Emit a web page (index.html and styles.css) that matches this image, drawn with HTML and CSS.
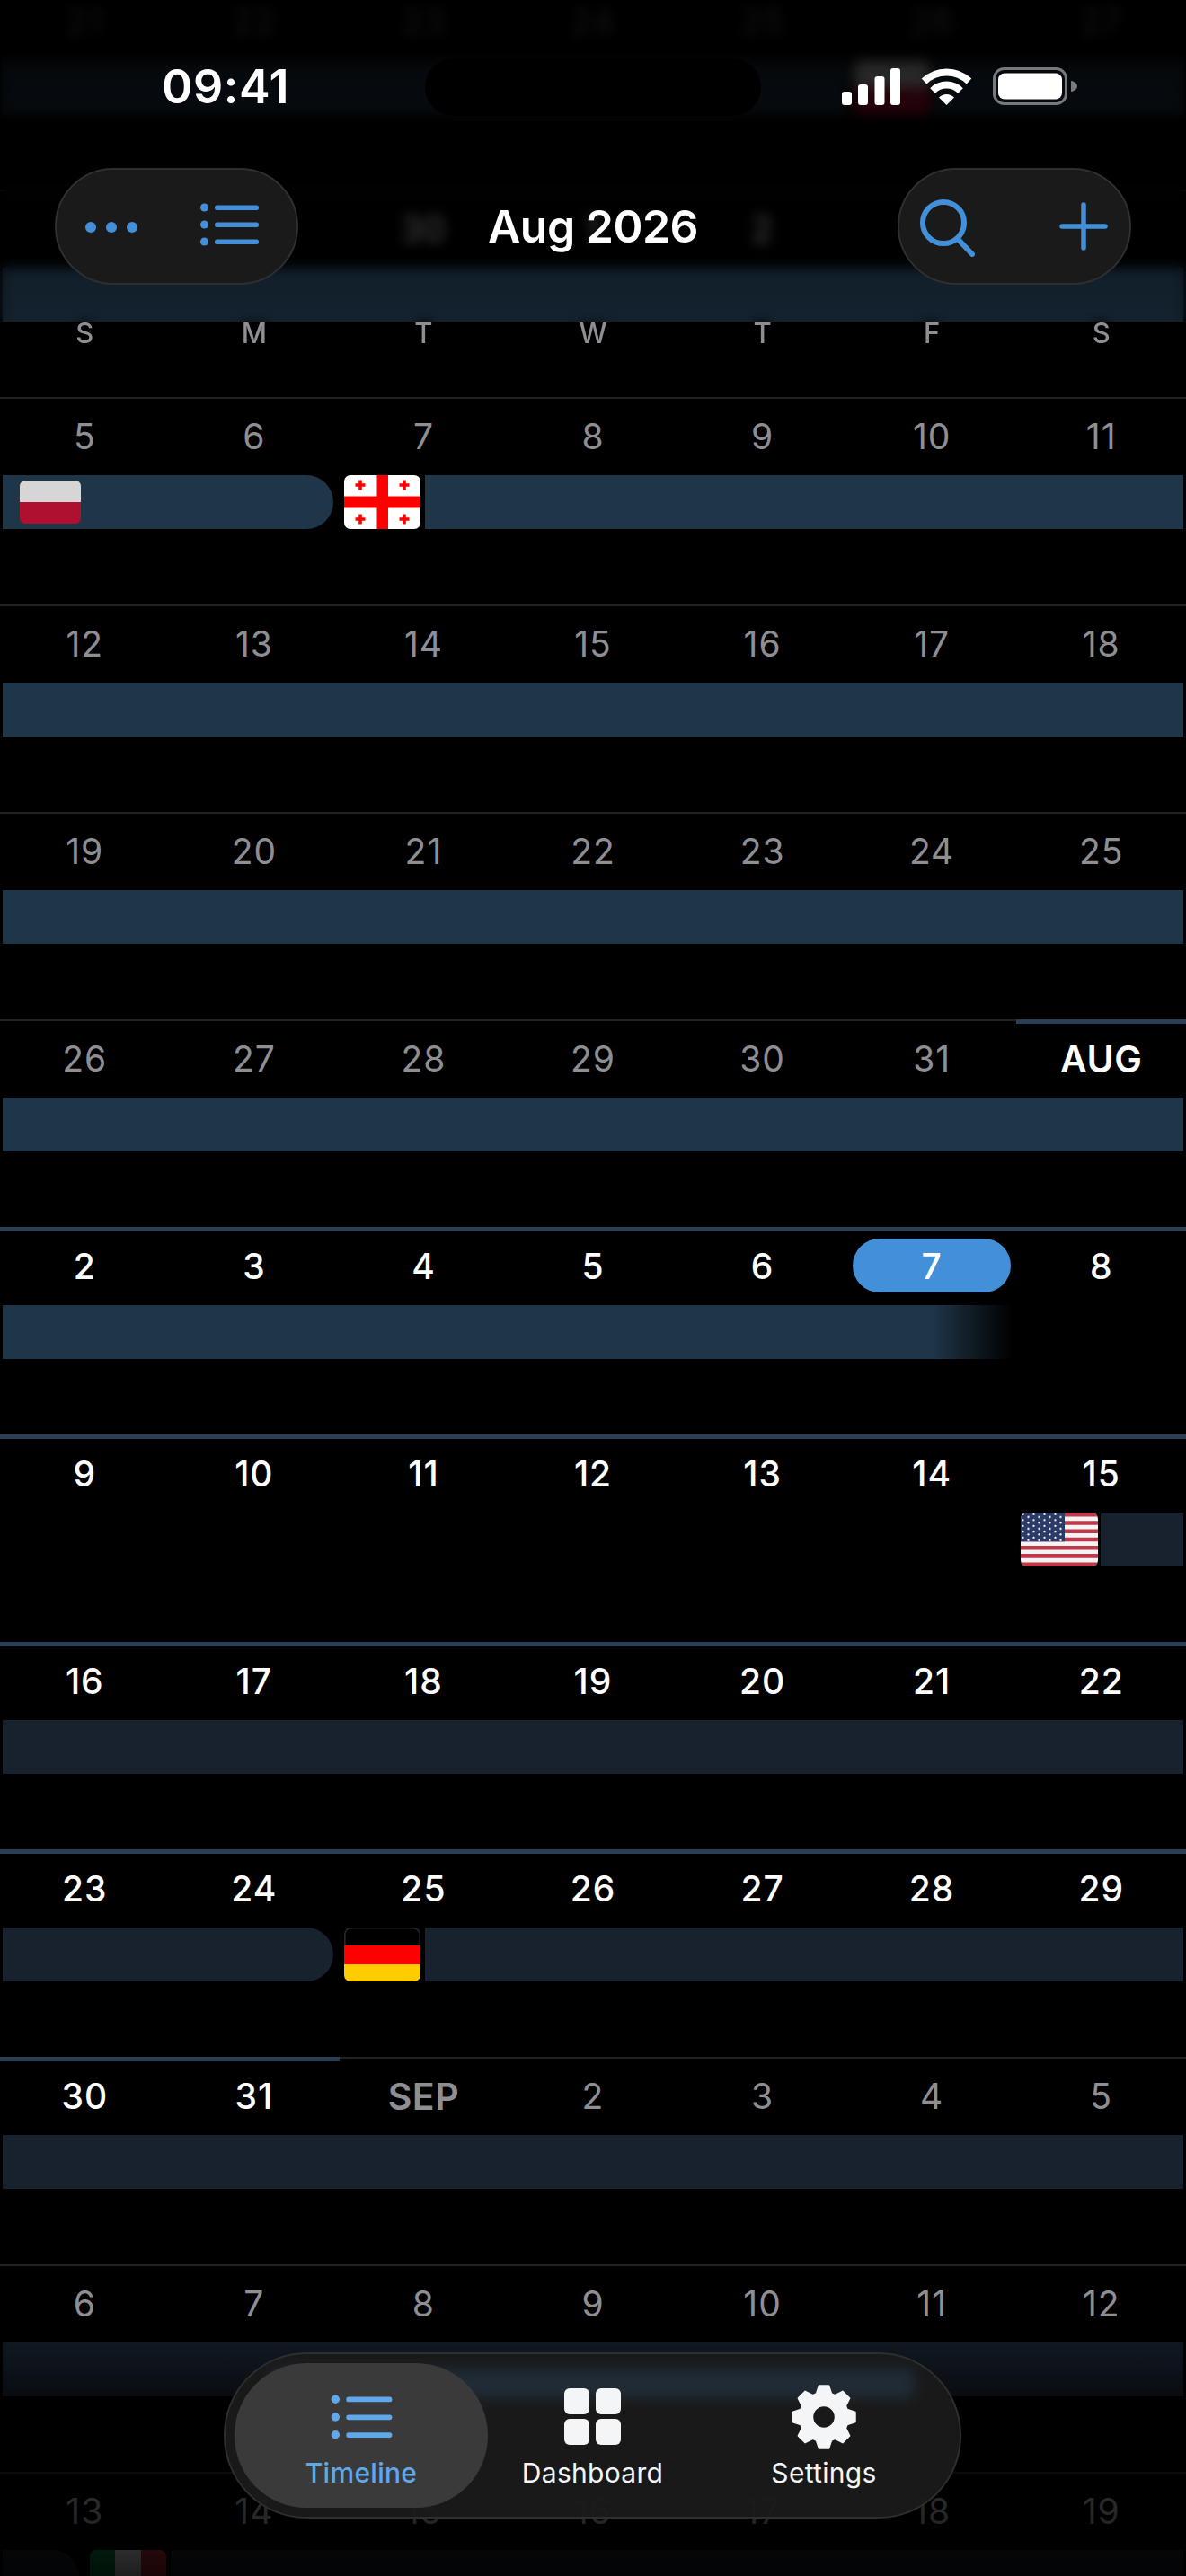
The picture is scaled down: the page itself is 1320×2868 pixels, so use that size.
FILE: index.html
```html
<!DOCTYPE html>
<html lang="en">
<head>
<meta charset="utf-8">
<title>Timeline</title>
<link rel="stylesheet" href="styles.css">
</head>
<body>
<svg class="defs" width="0" height="0" aria-hidden="true">
  <defs>
    <pattern id="stars" width="12" height="6.5" patternUnits="userSpaceOnUse">
      <circle cx="2.5" cy="1.8" r="1.1" fill="#fff"/>
      <circle cx="8.5" cy="4.9" r="1.1" fill="#fff"/>
    </pattern>
    <symbol id="flag-pl" viewBox="0 0 68 48" preserveAspectRatio="none">
      <rect width="68" height="24" fill="#d6d6d6"/>
      <rect y="24" width="68" height="24" fill="#b01030"/>
    </symbol>
    <symbol id="flag-ge" viewBox="0 0 85 60" preserveAspectRatio="none">
      <rect width="85" height="60" fill="#fff"/>
      <path d="M36.500 0h12.500v60H36.500zM0 23.500h85v13H0z" fill="#f00"/>
      <path d="M16.200 5.500h3.600v3.700h3.700v3.600h-3.700v3.700h-3.600v-3.700h-3.700V9.200h3.700zM65.200 5.500h3.600v3.700h3.700v3.600h-3.700v3.700h-3.600v-3.700h-3.700V9.200h3.700zM16.200 43.500h3.600v3.700h3.700v3.600h-3.700v3.700h-3.600v-3.700h-3.700v-3.600h3.700zM65.200 43.500h3.600v3.700h3.700v3.600h-3.700v3.700h-3.600v-3.700h-3.700v-3.600h3.700z" fill="#f00"/>
    </symbol>
    <symbol id="flag-us" viewBox="0 0 86 60" preserveAspectRatio="none">
      <rect width="86" height="60" fill="#f4f4f4"/>
      <path d="M0 0h86v4.600H0zM0 9.200h86v4.600H0zM0 18.500h86v4.600H0zM0 27.700h86v4.600H0zM0 36.900h86v4.600H0zM0 46.100h86v4.600H0zM0 55.400h86V60H0z" fill="#c0394b"/>
      <rect width="49" height="32.300" fill="#2b3a67"/>
      <rect width="49" height="32.300" fill="url(#stars)"/>
    </symbol>
    <symbol id="flag-de" viewBox="0 0 85 60" preserveAspectRatio="none">
      <rect width="85" height="20" fill="#000"/>
      <rect y="20" width="85" height="21" fill="#f00"/>
      <rect y="41" width="85" height="19" fill="#ffcc00"/>
      <path d="M.8 20V7.500A6.700 6.700 0 0 1 7.500.8h70a6.700 6.700 0 0 1 6.700 6.700V20" fill="none" stroke="#2b2b2b" stroke-width="1.500"/>
    </symbol>
    <symbol id="flag-it" viewBox="0 0 85 60" preserveAspectRatio="none">
      <rect width="29" height="60" fill="#009246"/>
      <rect x="28" width="29" height="60" fill="#f1f1f1"/>
      <rect x="57" width="28" height="60" fill="#ce2b37"/>
    </symbol>
    <symbol id="icon-list" viewBox="0 0 65 48">
      <ellipse cx="4.500" cy="5" rx="4.500" ry="4.500"/>
      <ellipse cx="4.500" cy="24" rx="4.500" ry="4.500"/>
      <ellipse cx="4.500" cy="43" rx="4.500" ry="4.500"/>
      <rect x="16" y="2.500" width="49" height="5.500" rx="2.500"/>
      <rect x="16" y="21.500" width="49" height="5.500" rx="2.500"/>
      <rect x="16" y="40.500" width="49" height="5.500" rx="2.500"/>
    </symbol>
  </defs>
</svg>

<main class="screen">
  <section class="calendar">
    <div class="week">
      <div class="rule"><i class="rule-thin"></i></div>
      <div class="days"><span class="day">21</span><span class="day">22</span><span class="day">23</span><span class="day">24</span><span class="day">25</span><span class="day">26</span><span class="day">27</span></div>
      <div class="track"><div class="seg seg--past seg--w940"></div><svg class="flag flag--ghost"><use href="#flag-pl"/></svg><div class="seg seg--past seg--fill"></div></div>
    </div>
    <div class="week">
      <div class="rule"><i class="rule-thin"></i></div>
      <div class="days"><span class="day">28</span><span class="day">29</span><span class="day">30</span><span class="day">1</span><span class="day">2</span><span class="day">3</span><span class="day">4</span></div>
      <div class="track"><div class="seg seg--past seg--fill"></div></div>
    </div>
    <div class="week">
      <div class="rule"><i class="rule-thin"></i></div>
      <div class="days"><span class="day">5</span><span class="day">6</span><span class="day">7</span><span class="day">8</span><span class="day">9</span><span class="day">10</span><span class="day">11</span></div>
      <div class="track">
        <div class="seg seg--past seg--end seg--w368"><svg class="flag flag--small"><use href="#flag-pl"/></svg></div>
        <svg class="flag flag--after-end"><use href="#flag-ge"/></svg>
        <div class="seg seg--past seg--fill"></div>
      </div>
    </div>
    <div class="week">
      <div class="rule"><i class="rule-thin"></i></div>
      <div class="days"><span class="day">12</span><span class="day">13</span><span class="day">14</span><span class="day">15</span><span class="day">16</span><span class="day">17</span><span class="day">18</span></div>
      <div class="track"><div class="seg seg--past seg--fill"></div></div>
    </div>
    <div class="week">
      <div class="rule"><i class="rule-thin"></i></div>
      <div class="days"><span class="day">19</span><span class="day">20</span><span class="day">21</span><span class="day">22</span><span class="day">23</span><span class="day">24</span><span class="day">25</span></div>
      <div class="track"><div class="seg seg--past seg--fill"></div></div>
    </div>
    <div class="week">
      <div class="rule"><i class="rule-thin"></i><i class="rule-thick rule-thick--one"></i></div>
      <div class="days"><span class="day">26</span><span class="day">27</span><span class="day">28</span><span class="day">29</span><span class="day">30</span><span class="day">31</span><span class="day day--in day--month">AUG</span></div>
      <div class="track"><div class="seg seg--past seg--fill"></div></div>
    </div>
    <div class="week">
      <div class="rule"><i class="rule-thick rule-thick--all"></i></div>
      <div class="days"><span class="day day--in">2</span><span class="day day--in">3</span><span class="day day--in">4</span><span class="day day--in">5</span><span class="day day--in">6</span><span class="day day--in day--today">7</span><span class="day day--in">8</span></div>
      <div class="track"><div class="seg seg--today"></div></div>
    </div>
    <div class="week">
      <div class="rule"><i class="rule-thick rule-thick--all"></i></div>
      <div class="days"><span class="day day--in">9</span><span class="day day--in">10</span><span class="day day--in">11</span><span class="day day--in">12</span><span class="day day--in">13</span><span class="day day--in">14</span><span class="day day--in">15</span></div>
      <div class="track track--end"><svg class="flag flag--us"><use href="#flag-us"/></svg><div class="seg seg--next seg--w92"></div></div>
    </div>
    <div class="week">
      <div class="rule"><i class="rule-thick rule-thick--all"></i></div>
      <div class="days"><span class="day day--in">16</span><span class="day day--in">17</span><span class="day day--in">18</span><span class="day day--in">19</span><span class="day day--in">20</span><span class="day day--in">21</span><span class="day day--in">22</span></div>
      <div class="track"><div class="seg seg--next seg--fill"></div></div>
    </div>
    <div class="week">
      <div class="rule"><i class="rule-thick rule-thick--all"></i></div>
      <div class="days"><span class="day day--in">23</span><span class="day day--in">24</span><span class="day day--in">25</span><span class="day day--in">26</span><span class="day day--in">27</span><span class="day day--in">28</span><span class="day day--in">29</span></div>
      <div class="track">
        <div class="seg seg--next seg--end seg--w368"></div>
        <svg class="flag flag--after-end"><use href="#flag-de"/></svg>
        <div class="seg seg--next seg--fill"></div>
      </div>
    </div>
    <div class="week">
      <div class="rule"><i class="rule-thick rule-thick--two"></i><i class="rule-thin"></i></div>
      <div class="days"><span class="day day--in">30</span><span class="day day--in">31</span><span class="day day--month">SEP</span><span class="day">2</span><span class="day">3</span><span class="day">4</span><span class="day">5</span></div>
      <div class="track"><div class="seg seg--next seg--fill"></div></div>
    </div>
    <div class="week">
      <div class="rule"><i class="rule-thin"></i></div>
      <div class="days"><span class="day">6</span><span class="day">7</span><span class="day">8</span><span class="day">9</span><span class="day">10</span><span class="day">11</span><span class="day">12</span></div>
      <div class="track"><div class="seg seg--next seg--fill"></div></div>
    </div>
    <div class="week">
      <div class="rule"><i class="rule-thin"></i></div>
      <div class="days"><span class="day">13</span><span class="day">14</span><span class="day">15</span><span class="day">16</span><span class="day">17</span><span class="day">18</span><span class="day">19</span></div>
      <div class="track">
        <div class="seg seg--next seg--end seg--w85"></div>
        <svg class="flag flag--after-end"><use href="#flag-it"/></svg>
        <div class="seg seg--next seg--fill"></div>
      </div>
    </div>
  </section>

  <div class="bottom-fade"></div>

  <header class="header">
    <div class="header-glass"></div>
    <div class="island"></div>
    <div class="status">
      <span class="time">09:41</span>
      <div class="status-icons">
        <svg class="signal" viewBox="0 0 65 41" fill="#fff">
          <rect x="0" y="26" width="11" height="15" rx="3"/>
          <rect x="18" y="18" width="11" height="23" rx="3"/>
          <rect x="36.500" y="9" width="11" height="32" rx="3"/>
          <rect x="54" y="0" width="11" height="41" rx="3"/>
        </svg>
        <svg class="wifi" viewBox="0 0 57 41">
          <path d="M3.500 14.500a36 36 0 0 1 50 0" fill="none" stroke="#fff" stroke-width="8"/>
          <path d="M13 25a22 22 0 0 1 31 0" fill="none" stroke="#fff" stroke-width="8"/>
          <path d="M28.500 41L20 32.500a12 12 0 0 1 17 0z" fill="#fff"/>
        </svg>
        <svg class="battery" viewBox="0 0 94 42">
          <rect x="1.500" y="1.500" width="80" height="39" rx="11" fill="none" stroke="#77797c" stroke-width="3"/>
          <rect x="6" y="6.500" width="71" height="29" rx="7" fill="#fff"/>
          <path d="M87 15c4 .5 7 3 7 6s-3 5.500-7 6z" fill="#77797c"/>
        </svg>
      </div>
    </div>
    <div class="toolbar">
      <div class="pill pill--left">
        <svg class="dots" viewBox="0 0 58 12" fill="currentColor">
          <circle cx="6" cy="6" r="6"/><circle cx="29" cy="6" r="6"/><circle cx="52" cy="6" r="6"/>
        </svg>
        <svg class="list-small" fill="currentColor"><use href="#icon-list"/></svg>
      </div>
      <h1 class="title">Aug 2026</h1>
      <div class="pill pill--right">
        <svg class="search" viewBox="0 0 62 64" fill="none" stroke="currentColor" stroke-width="6">
          <circle cx="26" cy="26" r="23"/>
          <path d="M42 44l16 17" stroke-linecap="round"/>
        </svg>
        <svg class="plus" viewBox="0 0 54 54" fill="none" stroke="currentColor" stroke-width="5.500" stroke-linecap="round">
          <path d="M27 3v48M3 27h48"/>
        </svg>
      </div>
    </div>
    <div class="weekdays"><span>S</span><span>M</span><span>T</span><span>W</span><span>T</span><span>F</span><span>S</span></div>
  </header>

  <nav class="nav">
    <div class="tab tab--active">
      <svg class="tab-list" fill="currentColor"><use href="#icon-list"/></svg>
      <span class="tab-label">Timeline</span>
    </div>
    <div class="tab">
      <svg class="tab-grid" viewBox="0 0 63 63" fill="currentColor">
        <rect x="0" y="0" width="28" height="29" rx="6"/>
        <rect x="35" y="0" width="28" height="29" rx="6"/>
        <rect x="0" y="34" width="28" height="29" rx="6"/>
        <rect x="35" y="34" width="28" height="29" rx="6"/>
      </svg>
      <span class="tab-label">Dashboard</span>
    </div>
    <div class="tab">
      <svg class="tab-gear" viewBox="-37 -37 74 74" fill="currentColor" fill-rule="evenodd" stroke="currentColor" stroke-width="1.500" stroke-linejoin="round">
        <path d="M-8.500-26L-5.500-35L5.500-35L8.500-26L12.370-24.400L20.860-28.640L28.640-20.860L24.400-12.370L26-8.500L35-5.500L35 5.500L26 8.500L24.400 12.370L28.640 20.860L20.860 28.640L12.370 24.400L8.500 26L5.500 35L-5.500 35L-8.500 26L-12.370 24.400L-20.860 28.640L-28.640 20.860L-24.400 12.370L-26 8.500L-35 5.500L-35-5.500L-26-8.500L-24.400-12.370L-28.640-20.860L-20.860-28.640L-12.370-24.400ZM0-12.500A12.500 12.500 0 1 0 0 12.500A12.500 12.500 0 1 0 0-12.500Z"/>
      </svg>
      <span class="tab-label">Settings</span>
    </div>
  </nav>
</main>
</body>
</html>
```

FILE: styles.css
```css
* { box-sizing: border-box; }

html, body {
  margin: 0;
  padding: 0;
  background: #000;
}

.defs { position: absolute; }

.screen {
  position: relative;
  width: 1320px;
  height: 2868px;
  overflow: hidden;
  background: #000;
  font-family: Inter, "Liberation Sans", sans-serif;
  color: #fff;
}

/* calendar */
.calendar { margin-top: -20px; }

.week { height: 231px; }

.rule {
  display: flex;
  align-items: flex-start;
  height: 5px;
}

.rule-thin {
  flex: 1;
  height: 2px;
  background: #222;
}

.rule-thick {
  height: 5px;
  background: #2a3f55;
}
.rule-thick--one { width: 189px; }
.rule-thick--two { width: 378px; }
.rule-thick--all { flex: 1; }

.days {
  display: grid;
  grid-template-columns: repeat(7, 1fr);
  padding-top: 8px;
}

.day {
  height: 60px;
  line-height: 62px;
  text-align: center;
  font-size: 39px;
  font-weight: 400;
  letter-spacing: 1px;
  color: #8e8e93;
}

.day--in { color: #fff; font-weight: 500; }
.day--month { font-size: 41px; font-weight: 600; letter-spacing: .5px; }

.day--today {
  margin: 0 6px;
  border-radius: 30px;
  background: #4390d8;
}

.track {
  display: flex;
  height: 60px;
  margin: 14px 3px 0;
}
.track--end { justify-content: flex-end; }

.seg { height: 60px; }
.seg--past { background: #1f3548; }
.seg--next { background: #17222e; }
.seg--fill { flex: 1; }
.seg--w85 { width: 85px; }
.seg--w92 { width: 92px; }
.seg--w368 { width: 368px; }
.seg--w940 { width: 940px; }
.seg--end { border-radius: 0 30px 30px 0; }

.seg--today {
  width: 1124px;
  background: linear-gradient(90deg, #1f3548 0, #1f3548 1035px, #000 1124px);
}

.seg:has(.flag--small) {
  display: flex;
  align-items: center;
  padding-left: 19px;
}

.flag {
  display: block;
  flex: none;
  width: 85px;
  height: 60px;
  border-radius: 7px;
}
.flag--small { width: 68px; height: 48px; border-radius: 6px; }
.flag--after-end { margin: 0 5px 0 12px; }
.flag--us { width: 86px; margin-right: 3px; }
.flag--ghost { margin: 0 4px 0 7px; }

.bottom-fade {
  position: absolute;
  left: 0;
  right: 0;
  top: 2590px;
  bottom: 0;
  background: linear-gradient(180deg,
    rgba(0, 0, 0, 0) 0,
    rgba(0, 0, 0, .3) 18px,
    rgba(0, 0, 0, .62) 78px,
    rgba(0, 0, 0, .72) 206px,
    rgba(0, 0, 0, .88) 278px);
}

/* header */
.header {
  position: absolute;
  left: 0;
  right: 0;
  top: 0;
}

.header-glass {
  position: absolute;
  left: 0;
  right: 0;
  top: 0;
  height: 358px;
  -webkit-backdrop-filter: blur(7px);
  backdrop-filter: blur(7px);
  background: linear-gradient(180deg,
    rgba(0, 0, 0, .88) 0,
    rgba(0, 0, 0, .78) 130px,
    rgba(0, 0, 0, .5) 220px,
    rgba(0, 0, 0, .34) 358px);
}

.island {
  position: absolute;
  left: 473px;
  top: 65px;
  width: 374px;
  height: 64px;
  border-radius: 32px;
  background: #000;
}

.status {
  position: relative;
  height: 187px;
  display: flex;
  align-items: flex-start;
  justify-content: space-between;
  padding: 67px 121px 0 180px;
}

.time {
  font-size: 52px;
  line-height: 60px;
  font-weight: 600;
  letter-spacing: .6px;
}

.status-icons {
  display: flex;
  align-items: flex-start;
  padding-top: 8px;
}

.signal { width: 65px; height: 41px; margin-top: 1px; }
.wifi { width: 57px; height: 41px; margin: 1px 23px 0; }
.battery { width: 94px; height: 42px; }

.toolbar {
  position: relative;
  display: grid;
  grid-template-columns: 1fr auto 1fr;
  align-items: center;
  height: 130px;
  padding: 0 61px;
}

.pill {
  display: flex;
  align-items: center;
  height: 130px;
  border: 2px solid #2d2f31;
  border-radius: 65px;
  background: #1a1a1a;
  color: #4390d8;
}
.pill--left {
  justify-self: start;
  width: 271px;
  padding-left: 32px;
  gap: 70px;
}
.pill--right {
  justify-self: end;
  width: 260px;
  padding-left: 23px;
  gap: 93px;
}

.dots { width: 58px; height: 12px; margin-top: 2px; }
.list-small { width: 65px; height: 48px; margin-top: -4px; }
.search { width: 62px; height: 64px; margin-top: 4px; }
.plus { width: 54px; height: 54px; }

.title {
  margin: 0;
  font-size: 50px;
  line-height: 62px;
  font-weight: 600;
  letter-spacing: -.5px;
  color: #fff;
}

.weekdays {
  position: relative;
  display: grid;
  grid-template-columns: repeat(7, 1fr);
  margin-top: 34px;
  font-size: 31px;
  line-height: 40px;
  font-weight: 500;
  text-align: center;
  color: #8e8e93;
  text-shadow: 0 0 10px #000, 0 0 14px #000;
}

/* tab bar */
.nav {
  position: absolute;
  left: 249px;
  top: 2619px;
  width: 821px;
  height: 185px;
  display: grid;
  grid-template-columns: 282px 1fr 282px;
  padding: 10px;
  border: 2px solid #2e2e2e;
  border-radius: 92px;
  background: rgba(26, 26, 26, .95);
  overflow: hidden;
}

.nav::after {
  content: "";
  position: absolute;
  left: 50px;
  right: 50px;
  top: 16px;
  height: 34px;
  border-radius: 8px;
  background: rgba(50, 85, 115, .3);
  filter: blur(7px);
}

.tab {
  position: relative;
  z-index: 1;
  display: flex;
  flex-direction: column;
  align-items: center;
  padding-top: 24px;
  border-radius: 80px;
  color: #f4f5f7;
}

.tab--active {
  background: #3a3a3a;
  color: #5fa8ec;
}

.tab-list { width: 69px; height: 50px; margin: 11px 0; }
.tab-grid { width: 63px; height: 63px; margin: 4px 0 5px; }
.tab-gear { width: 74px; height: 74px; margin-top: -1px; margin-bottom: -1px; }

.tab-label {
  margin-top: 8px;
  font-size: 30px;
  line-height: 36px;
  font-weight: 400;
  letter-spacing: .3px;
}
.tab--active .tab-label { font-weight: 500; }
```
